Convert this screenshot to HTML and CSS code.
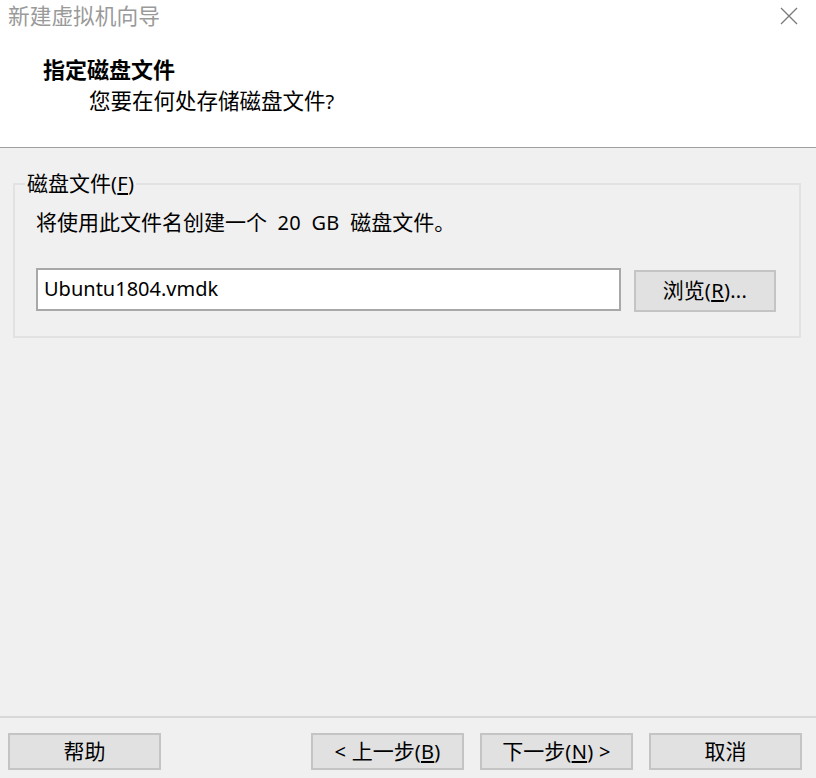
FILE: index.html
```html
<!DOCTYPE html>
<html lang="zh-CN">
<head>
<meta charset="utf-8">
<title>新建虚拟机向导</title>
<link rel="stylesheet" href="styles.css">
</head>
<body>
<div class="dialog">
  <div class="header">
    <div class="titlebar">
      <span class="title">新建虚拟机向导</span>
      <svg class="close" width="18" height="18" viewBox="0 0 18 18"><path d="M1 1 L17 17 M17 1 L1 17" stroke="#7a7a7a" stroke-width="1.3" fill="none"/></svg>
    </div>
    <div class="heading">指定磁盘文件</div>
    <div class="subheading">您要在何处存储磁盘文件<span class="en">?</span></div>
  </div>
  <div class="main">
    <fieldset class="group">
      <legend>磁盘文件<span class="en">(<u>F</u>)</span></legend>
      <div class="desc">将使用此文件名创建一个<span class="en wide-sp"> 20 GB </span>磁盘文件。</div>
      <div class="row">
        <div class="input en">Ubuntu1804.vmdk</div>
        <div class="btn browse">浏览<span class="en">(<u>R</u>)...</span></div>
      </div>
    </fieldset>
  </div>
  <div class="footer">
    <div class="btn wide">帮助</div>
    <div class="spacer"></div>
    <div class="btn wide"><span class="en">&lt; </span>上一步<span class="en">(<u>B</u>)</span></div>
    <div class="btn wide">下一步<span class="en">(<u>N</u>) &gt;</span></div>
    <div class="btn wide">取消</div>
  </div>
</div>
</body>
</html>
```
FILE: styles.css
```css
* { box-sizing: border-box; }
html, body {
  margin: 0;
  padding: 0;
}
body {
  width: 816px;
  height: 778px;
  background: #f0f0f0;
  font-family: "Noto Sans", "Noto Sans CJK SC", sans-serif;
  font-size: 21px;
  color: #000;
  overflow: hidden;
}
.en { font-size: 20px; letter-spacing: 0.3px; }
.wide-sp { word-spacing: 5px; }
.dialog {
  display: flex;
  flex-direction: column;
  height: 778px;
}
.header {
  height: 148px;
  background: #fff;
  border-bottom: 1px solid #a0a0a0;
  flex: none;
}
.titlebar {
  display: flex;
  justify-content: space-between;
  align-items: center;
  height: 32px;
  padding: 0 18px 0 8px;
}
.title {
  color: #9a9a9a;
  font-size: 21.7px;
  line-height: 32px;
}
.close { display: block; }
.heading {
  font-weight: bold;
  font-size: 22px;
  margin: 24px 0 0 43px;
  line-height: 26px;
}
.subheading {
  font-size: 21.5px;
  margin: 6px 0 0 89px;
  line-height: 26px;
}
.main {
  flex: 1;
  padding: 24px 15px 0 13px;
}
.group {
  margin: 0;
  padding: 15px 23px 24px 21px;
  border: 2px solid #e2e2e2;
  min-width: 0;
}
.group legend {
  margin-left: -11px;
  padding: 0 2px;
  line-height: 23px;
}
.desc {
  line-height: 24px;
}
.row {
  display: flex;
  align-items: flex-start;
  gap: 13px;
  margin-top: 33px;
}
.input {
  flex: 1;
  height: 43px;
  background: #fff;
  border: 2px solid #a8a8a8;
  padding: 0 6px;
  line-height: 38px;
  letter-spacing: 0;
}
.btn {
  background: #e1e1e1;
  border: 2px solid #c4c4c4;
  text-align: center;
  white-space: nowrap;
}
.browse {
  width: 142px;
  height: 42px;
  margin-top: 2px;
  line-height: 37px;
}
.footer {
  flex: none;
  display: flex;
  gap: 16px;
  height: 62px;
  border-top: 2px solid #d8d8d8;
  padding: 15px 14px 8px 8px;
}
.spacer { flex: 1; }
.wide {
  width: 153px;
  height: 37px;
  line-height: 33px;
}
u { text-underline-offset: 2px; }
```
